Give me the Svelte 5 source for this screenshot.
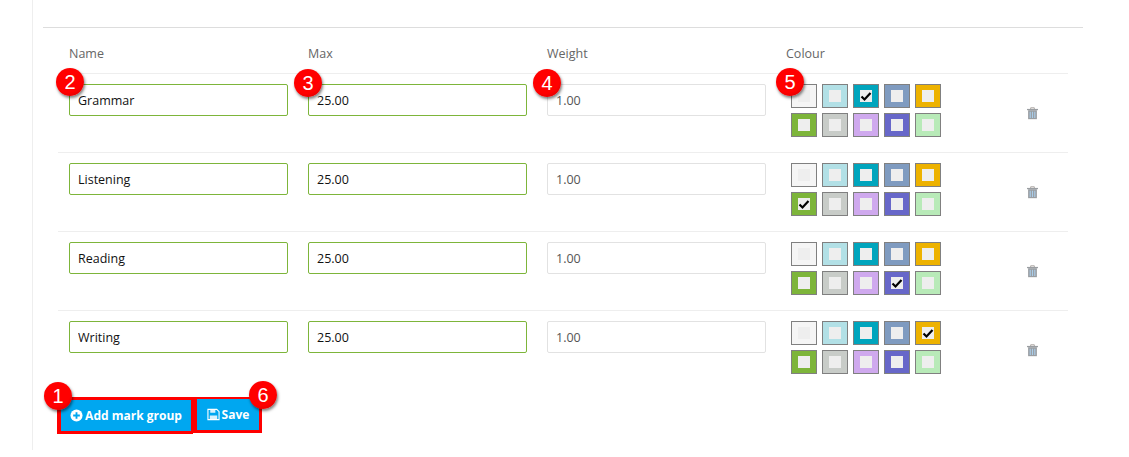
<script lang="ts">
	type Group = { name: string; checked: number };

	const groups: Group[] = [
		{ name: 'Grammar', checked: 2 },
		{ name: 'Listening', checked: 5 },
		{ name: 'Reading', checked: 8 },
		{ name: 'Writing', checked: 4 }
	];

	const colours = [
		'#f5f5f5', '#b2e0e6', '#00a5bd', '#7f9bc0', '#edb200',
		'#7db53a', '#c8ccc8', '#cfa9ee', '#6767c9', '#b8eab8'
	];

	// callout markers lie over the form
	const badges = [
		{ n: 1, x: 58, y: 396 },
		{ n: 2, x: 70, y: 82 },
		{ n: 3, x: 308, y: 83 },
		{ n: 4, x: 547, y: 83 },
		{ n: 5, x: 790, y: 82 },
		{ n: 6, x: 263, y: 395 }
	];
</script>

<div class="page">
	<div class="panel">
		<div class="head row">
			<span>Name</span>
			<span>Max</span>
			<span>Weight</span>
			<span>Colour</span>
		</div>
		{#each groups as group}
			<div class="row line">
				<input class="valid" value={group.name} />
				<input class="valid" value="25.00" />
				<input class="weight" value="1.00" />
				<div class="swatches">
					{#each colours as colour, i}
						<span class="swatch" style="background: {colour}">
							<span class="inner">
								{#if group.checked === i}
									<svg viewBox="0 0 12 12" width="12" height="12">
										<path d="M1.5 6.5 L4.5 9.5 L10.5 3" fill="none" stroke="#000" stroke-width="2.2" />
									</svg>
								{/if}
							</span>
						</span>
					{/each}
				</div>
				<svg class="trash" viewBox="0 0 12 14" width="11" height="13">
					<path d="M4 2 V.8 H8 V2" fill="none" stroke="#a09a96" stroke-width="1" />
					<path d="M0 2 H12 V3.4 H0 Z" fill="#9a9ea2" />
					<path d="M1.2 3.4 H10.8 V13.2 H1.2 Z" fill="#9a9ea2" />
					<path d="M3.5 5 V11.8 M6 5 V11.8 M8.5 5 V11.8" stroke="#a9cdea" stroke-width="1.2" />
				</svg>
			</div>
		{/each}
		<div class="actions">
			<button type="button" class="add">
				<svg viewBox="0 0 14 14" width="13" height="13">
					<circle cx="7" cy="7" r="6.5" fill="#fff" />
					<path d="M7 3.4 V10.6 M3.4 7 H10.6" stroke="#00a7f0" stroke-width="2" />
				</svg>
				Add mark group
			</button>
			<button type="button" class="save">
				<svg viewBox="0 0 14 14" width="13" height="13">
					<path d="M1 1.5 H10.5 L13 4 V12.5 H1 Z" fill="none" stroke="#fff" stroke-width="1.2" />
					<path d="M3.5 1.5 H9 V5 H3.5 Z M3 8 H11 V12.5 H3 Z" fill="#fff" opacity="0.85" />
				</svg>
				Save
			</button>
		</div>
	</div>
	{#each badges as b}
		<span class="badge" style="left: {b.x - 14}px; top: {b.y - 14}px">{b.n}</span>
	{/each}
</div>

<style>
	:global(body) {
		margin: 0;
		background: #fff;
		font-family: 'Open Sans', sans-serif;
	}
	.page {
		position: relative;
		width: 1129px;
		height: 457px;
		overflow: hidden;
		box-sizing: border-box;
		padding-left: 32px;
	}
	.panel {
		width: 1051px;
		height: 450px;
		box-sizing: border-box;
		padding: 27px 15px 0 25px;
		border-left: 1px solid #eee;
		position: relative;
	}
	.panel::before {
		content: '';
		position: absolute;
		left: 10px;
		right: 0;
		top: 27px;
		border-top: 1px solid #ddd;
	}
	.row {
		display: grid;
		grid-template-columns: 219px 219px 219px 1fr;
		column-gap: 20px;
		padding: 0 11px;
	}
	.head {
		height: 46px;
		align-items: center;
		font-size: 12.5px;
		color: #666;
		padding-top: 6px;
		box-sizing: border-box;
	}
	.line {
		position: relative;
		height: 79px;
		box-sizing: border-box;
		padding-top: 10px;
		align-items: start;
		border-top: 1px solid #eee;
	}
	input {
		width: 219px;
		height: 32px;
		box-sizing: border-box;
		border-radius: 2px;
		padding: 0 8px;
		font: 12.5px 'Open Sans', sans-serif;
		outline: none;
		background: #fff;
	}
	.valid {
		border: 1px solid #7db53a;
		color: #111;
	}
	.weight {
		border: 1px solid #e2e2e2;
		color: #555;
	}
	.swatches {
		display: grid;
		grid-template-columns: repeat(5, 26px);
		grid-auto-rows: 24px;
		gap: 5px;
		margin-left: 5px;
	}
	.swatch {
		box-sizing: border-box;
		border: 1px solid #808080;
		display: flex;
		align-items: center;
		justify-content: center;
	}
	.inner {
		width: 12px;
		height: 12px;
		background: #eee;
		display: block;
		line-height: 0;
	}
	.trash {
		position: absolute;
		left: 969px;
		top: 33px;
	}
	.actions {
		display: flex;
		align-items: flex-start;
		position: absolute;
		left: 24px;
		top: 397px;
	}
	button {
		display: flex;
		align-items: center;
		justify-content: center;
		gap: 2px;
		box-sizing: border-box;
		background: #00a7f0;
		color: #fff;
		font: 700 12px 'Open Sans', sans-serif;
		padding: 0;
		border-style: solid;
		border-color: #f00;
	}
	.add {
		width: 136px;
		height: 37px;
		border-width: 3px 2px 3px 4px;
	}
	.save {
		width: 69px;
		height: 36px;
		border-width: 2px 3px 3px 4px;
	}
	.badge {
		position: absolute;
		width: 28px;
		height: 28px;
		border-radius: 50%;
		background: radial-gradient(circle at 42% 35%, #f00 60%, #c80000);
		box-shadow: 1px 2px 3px rgba(0, 0, 0, 0.5);
		color: #fff;
		font: 20px/28px 'Liberation Sans', sans-serif;
		text-align: center;
	}
</style>
